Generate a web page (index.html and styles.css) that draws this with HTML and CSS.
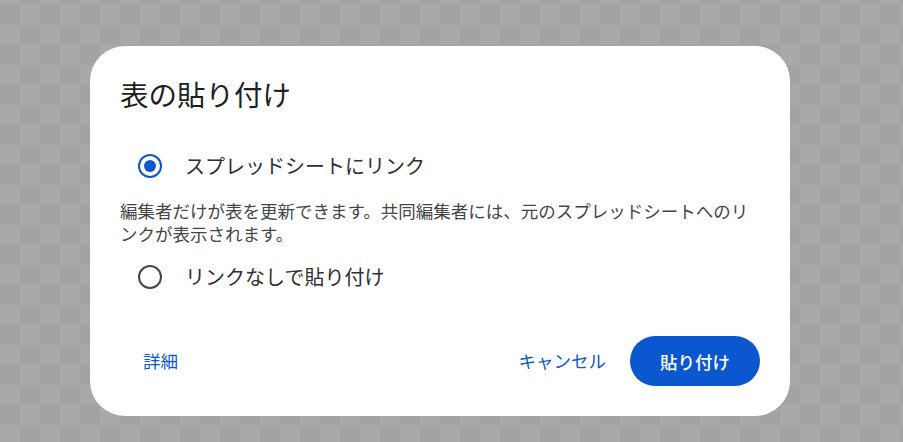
FILE: index.html
```html
<!DOCTYPE html>
<html lang="ja">
<head>
<meta charset="UTF-8">
<meta name="viewport" content="width=device-width, initial-scale=1.0">
<title>表の貼り付け</title>
<link rel="stylesheet" href="styles.css">
</head>
<body>
<div class="dialog">
    <h2 class="dialog-title">表の貼り付け</h2>
    <div class="options">
        <label class="option">
            <input type="radio" name="paste" checked>
            <span class="radio"></span>
            <span class="option-text">スプレッドシートにリンク</span>
        </label>
        <p class="option-desc">編集者だけが表を更新できます。共同編集者には、元のスプレッドシートへのリンクが表示されます。</p>
        <label class="option">
            <input type="radio" name="paste">
            <span class="radio"></span>
            <span class="option-text">リンクなしで貼り付け</span>
        </label>
    </div>
    <div class="dialog-footer">
        <a href="#" class="text-btn details">詳細</a>
        <div class="actions">
            <a href="#" class="text-btn">キャンセル</a>
            <button class="paste-btn">貼り付け</button>
        </div>
    </div>
</div>
</body>
</html>
```

FILE: styles.css
```css
body {
    margin: 0;
    height: 442px;
    font-family: "Noto Sans CJK JP", "Noto Sans", sans-serif;
    background-color: #a9a9a9;
    background-image: conic-gradient(#a9a9a9 0 25%, #a3a3a3 0 50%, #a9a9a9 0 75%, #a3a3a3 0);
    background-size: 40px 40px;
    background-position: 0 5px;
    padding: 46px 0 0 90px;
    box-sizing: border-box;
}

.dialog {
    width: 700px;
    box-sizing: border-box;
    padding: 30px 30px 30px 30px;
    background: #fff;
    border-radius: 35px;
    color: #1f1f1f;
}

.dialog-title {
    margin: 0;
    font-size: 28.5px;
    font-weight: 400;
    line-height: 36px;
}

.options {
    margin-top: 29px;
}

.option {
    display: flex;
    align-items: center;
    height: 50px;
    cursor: pointer;
}
.option input {
    display: none;
}

.radio {
    width: 24px;
    height: 24px;
    box-sizing: border-box;
    border: 2.5px solid #444746;
    border-radius: 50%;
    margin-left: 18px;
    display: flex;
    align-items: center;
    justify-content: center;
}
.option input:checked + .radio {
    border-color: #0b57d0;
}
.option input:checked + .radio::after {
    content: "";
    width: 12px;
    height: 12px;
    border-radius: 50%;
    background: #0b57d0;
}

.option-text {
    margin-left: 23px;
    font-size: 20px;
    line-height: 26px;
    color: #303030;
}

.option-desc {
    margin: 8px 0 7px 0;
    font-size: 17.5px;
    line-height: 23px;
    color: #444746;
}

.dialog-footer {
    margin-top: 34px;
    display: flex;
    align-items: center;
    justify-content: space-between;
}

.text-btn {
    text-decoration: none;
    color: #0b57d0;
    font-size: 17.5px;
    font-weight: 400;
    line-height: 50px;
}
.details {
    margin-left: 23px;
}

.actions {
    display: flex;
    align-items: center;
    gap: 24px;
}

.paste-btn {
    height: 50px;
    padding: 0 30px;
    border: none;
    border-radius: 25px;
    background: #0b57d0;
    color: #fff;
    font-family: inherit;
    font-size: 17.5px;
    font-weight: 500;
    cursor: pointer;
}
```
